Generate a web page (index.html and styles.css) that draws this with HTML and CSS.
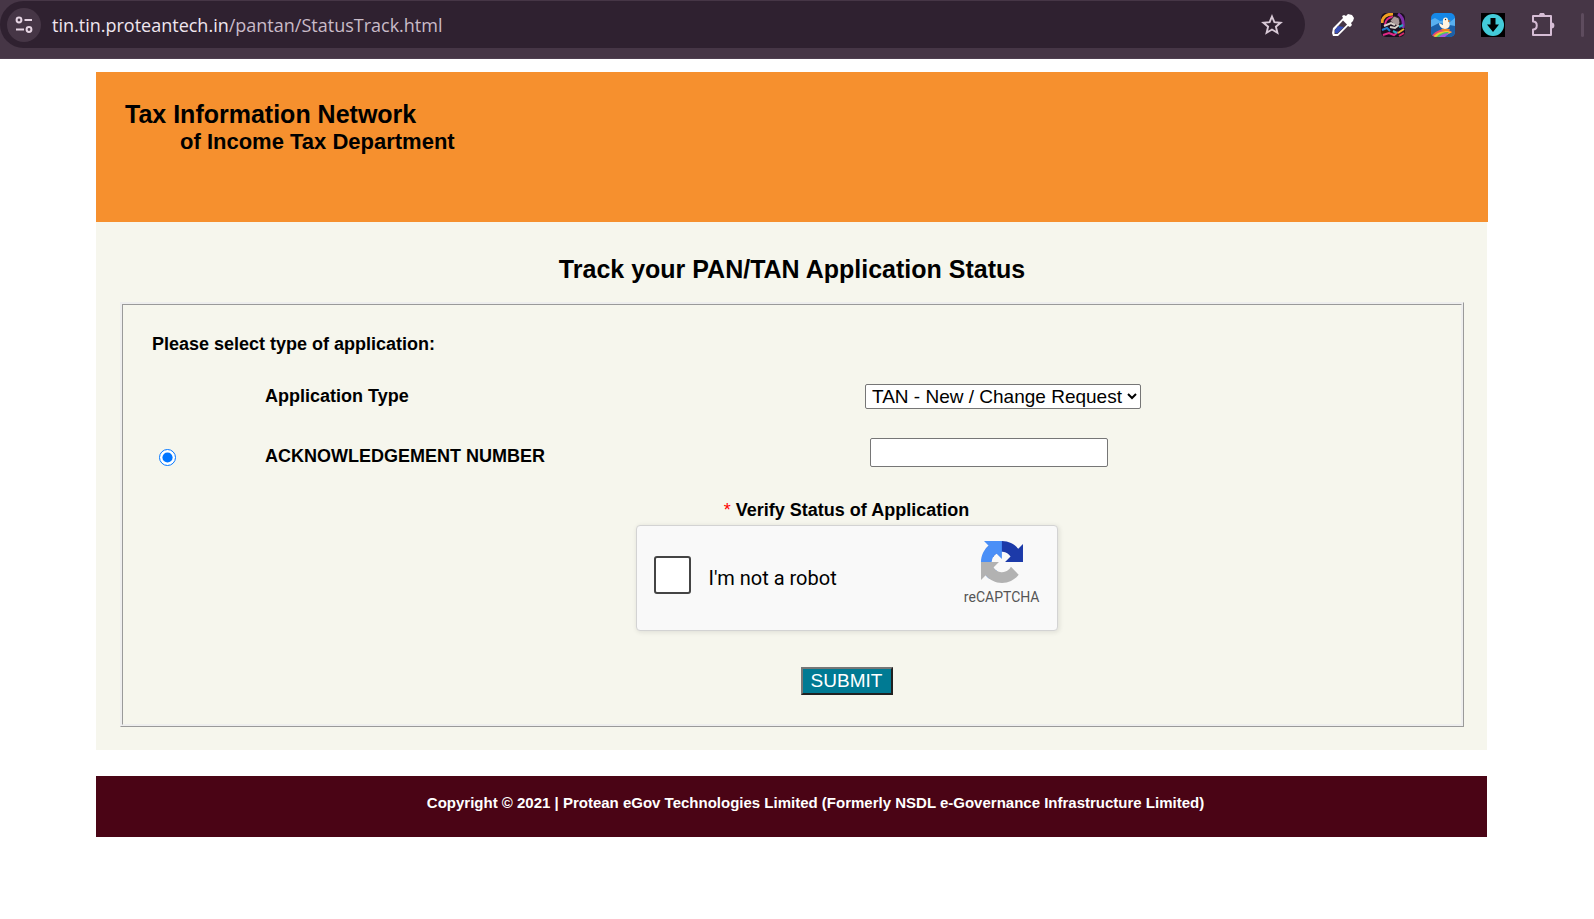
FILE: index.html
```html
<!DOCTYPE html>
<html lang="en">
<head>
    <meta charset="UTF-8">
    <title>Track your PAN/TAN Application Status</title>
    <link rel="stylesheet" href="styles.css">
</head>
<body>
    <div class="browser-bar">
        <div class="address-bar">
            <button class="site-info" aria-label="View site information">
                <svg width="18" height="18" viewBox="0 0 18 18" fill="none" stroke="#e6d5e3" stroke-width="2">
                    <circle cx="4" cy="4" r="2.4"/>
                    <path d="M9.500 4H17M1 13.500h8"/>
                    <circle cx="14" cy="13.500" r="2.4"/>
                </svg>
            </button>
            <a class="url" href="#">tin.tin.proteantech.in<span class="url-path">/pantan/StatusTrack.html</span></a>
            <button class="icon-button" aria-label="Bookmark this page">
                <svg width="22" height="22" viewBox="0 0 22 22" fill="none" stroke="#d8c9d6" stroke-width="1.9">
                    <path d="M11 2.500l2.400 5.700 6.200.5-4.700 4 1.500 6.100L11 15.500l-5.400 3.300 1.500-6.100-4.700-4 6.200-.5z"/>
                </svg>
            </button>
        </div>
        <div class="extensions">
            <button class="icon-button" aria-label="Color picker">
                <svg width="24" height="24" viewBox="0 0 24 24">
                    <path d="M2 23l-1-3 1-5L12 5l-1-2 2-1 2 1 2-2 4 1 2 3-1 3-2 2 1 2-2 2-2-1L7 23z" fill="#fff"/>
                    <path d="M12 7.500l4 4-9.500 9.500H3.500v-4z" fill="#463646"/>
                    <path d="M7 13l6 1-7 6.500-2-.5v-3z" fill="#3850b8"/>
                </svg>
            </button>
            <button class="icon-button" aria-label="Graffiti extension">
                <svg width="24" height="24" viewBox="0 0 24 24">
                    <clipPath id="tile"><rect width="24" height="24" rx="5"/></clipPath>
                    <g clip-path="url(#tile)" fill="none" stroke-width="2">
                        <rect width="24" height="24" fill="#1b1020"/>
                        <path d="M1 10C1 4 6 1 12 1" stroke="#f0a020" stroke-width="3"/>
                        <path d="M4 12c0-5 4-8 8-8" stroke="#e02888"/>
                        <path d="M17 1c5 3 6 8 5 14" stroke="#8030a8" stroke-width="3"/>
                        <path d="M9 8l4-5 5 2 1 5-3 3-3-2z" fill="#a89898" stroke="#332830" stroke-width="1"/>
                        <path d="M3 13l7-3 4 2M9 14l5 1 4-3" stroke="#d8d0c8"/>
                        <path d="M1 17l5-2 3 3" stroke="#2078c8"/>
                        <path d="M2 22l6-2 5 2 4-3" stroke="#e02888"/>
                        <path d="M12 18l4 2M18 14l4-2" stroke="#28a8c0"/>
                        <path d="M17 20l6-4" stroke="#e8b030"/>
                        <path d="M18 23l5-3" stroke="#d82868"/>
                    </g>
                </svg>
            </button>
            <button class="icon-button" aria-label="Duck extension">
                <svg width="24" height="24" viewBox="0 0 24 24">
                    <g clip-path="url(#tile)">
                        <rect width="24" height="24" fill="#1588e8"/>
                        <path d="M0 7l4-2 5 3 5-1 5 2 5-4v9H0z" fill="#58b0f0"/>
                        <path d="M0 14l8-4 16 3v11H0z" fill="#1c60a8"/>
                        <path d="M0 24c3-5 8-8 16-8l5 3-9 5z" fill="#e84870"/>
                        <path d="M2 24c3-4 8-6 15-6l4 1-9 5z" fill="#f0c830"/>
                        <path d="M5 24c3-3 7-5 13-5l-5 5z" fill="#48c868"/>
                        <path d="M8 24c3-3 6-4 10-4l-4 4z" fill="#a058e0"/>
                        <path d="M8 10l4 2V8c-1-4 5-5 5-1 0 2 3 4 1 7-2 3-9 3-10-4z" fill="#fff4e0"/>
                        <path d="M17 7l3 1-3 1zM10 16h9l-1 2h-6z" fill="#f08020"/>
                        <circle cx="14.500" cy="6.500" r=".7" fill="#222"/>
                    </g>
                </svg>
            </button>
            <button class="icon-button" aria-label="Downloader">
                <svg width="24" height="24" viewBox="0 0 24 24">
                    <rect width="24" height="24" fill="#000"/>
                    <circle cx="12" cy="12" r="11" fill="#43cbd9"/>
                    <path d="M9.500 5h5v6.500H18L12 19l-6-7.500h3.500z" fill="#000"/>
                </svg>
            </button>
            <button class="icon-button" aria-label="Extensions">
                <svg width="24" height="24" viewBox="0 0 24 24" stroke="#d6bdd5" stroke-width="2" stroke-linejoin="round">
                    <path d="M2 3h18v19H2v-5.500c5 0 5-8 0-8z" fill="none"/>
                    <path d="M9 2.500c0-2.500 4-2.500 4 0zM20.500 10.500c2.500 0 2.500 4 0 4z" fill="#d6bdd5"/>
                </svg>
            </button>
            <span class="separator"></span>
        </div>
    </div>

    <div class="page">
        <header class="site-header">
            <div class="site-name">Tax Information Network</div>
            <div class="site-department">of Income Tax Department</div>
        </header>

        <main class="content">
            <h1 class="page-title">Track your PAN/TAN Application Status</h1>
            <form class="status-form">
                <p class="form-intro">Please select type of application:</p>
                <div class="form-row">
                    <label class="form-label" for="appType">Application Type</label>
                    <select id="appType" class="type-select">
                        <option>TAN - New / Change Request</option>
                    </select>
                </div>
                <div class="form-row">
                    <input type="radio" id="ackOption" class="ack-radio" name="searchBy" aria-label="Search by acknowledgement number" checked>
                    <label class="form-label" for="ackNumber">ACKNOWLEDGEMENT NUMBER</label>
                    <input type="text" id="ackNumber" class="ack-input">
                </div>
                <div class="verify">
                    <p class="verify-title"><span class="required">*</span> Verify Status of Application</p>
                    <div class="captcha">
                        <input type="checkbox" id="notRobot" class="captcha-check">
                        <label for="notRobot" class="captcha-label">I'm not a robot</label>
                        <div class="captcha-brand">
                            <svg width="42" height="42" viewBox="0 0 64 64">
                                <path fill="#1c3aa9" d="M64 31.955l-.033-1.370V4.687l-7.160 7.160C50.948 4.674 42.033.093 32.050.093c-10.400 0-19.622 4.960-25.458 12.640l11.736 11.860a15.550 15.550 0 0 1 4.754-5.334c2.050-1.600 4.952-2.906 8.968-2.906.485 0 .860.057 1.135.163 4.976.393 9.288 3.140 11.828 7.124l-8.307 8.307L64 31.953"/>
                                <path fill="#4a8ff7" d="M31.862.094l-1.370.033H4.594l7.160 7.160C4.580 13.147 0 22.060 0 32.046c0 10.400 4.960 19.622 12.640 25.458L24.500 45.768a15.550 15.550 0 0 1-5.334-4.754c-1.600-2.050-2.906-4.952-2.906-8.968 0-.485.057-.860.163-1.135.393-4.976 3.140-9.288 7.124-11.828l8.307 8.307L31.860.095"/>
                                <path fill="#b2b2b2" d="M.001 32.045l.033 1.370v25.898l7.160-7.160c5.860 7.173 14.774 11.754 24.760 11.754 10.400 0 19.622-4.960 25.458-12.640l-11.736-11.860a15.550 15.550 0 0 1-4.754 5.334c-2.050 1.600-4.952 2.906-8.968 2.906-.485 0-.860-.057-1.135-.163-4.976-.393-9.288-3.140-11.828-7.124l8.307-8.307c-10.522.040-22.400.066-27.295-.005"/>
                            </svg>
                            <span>reCAPTCHA</span>
                        </div>
                    </div>
                    <button type="button" class="submit-button">SUBMIT</button>
                </div>
            </form>
        </main>

        <footer class="site-footer">
            Copyright © 2021 | Protean eGov Technologies Limited (Formerly NSDL e-Governance Infrastructure Limited)
        </footer>
    </div>
</body>
</html>
```
FILE: styles.css
```css
* {
    box-sizing: border-box;
}

body {
    margin: 0;
    background-color: #fff;
    color: #000;
    font-family: Arial, "Liberation Sans", sans-serif;
}

/* browser toolbar */
.browser-bar {
    display: flex;
    gap: 26px;
    height: 59px;
    padding: 1px 10px 10px 0;
    background-color: #463646;
    border-bottom: 1px solid #4e3e4f;
}

.address-bar {
    flex: 1;
    display: flex;
    align-items: center;
    padding: 0 22px 0 7px;
    border-radius: 24px;
    background-color: #2f2130;
}

.site-info {
    display: flex;
    align-items: center;
    justify-content: center;
    width: 34px;
    height: 34px;
    padding: 0;
    border: none;
    border-radius: 50%;
    background-color: #463646;
}

.url {
    flex: 1;
    margin-left: 11px;
    color: #f0e6ef;
    font-family: "Segoe UI", "Open Sans", "Noto Sans", sans-serif;
    font-size: 18px;
    text-decoration: none;
}

.url-path {
    color: #c9bbc8;
}

.icon-button {
    display: flex;
    padding: 0;
    border: none;
    background: none;
}

.extensions {
    display: flex;
    align-items: center;
    gap: 26px;
}

.separator {
    width: 3px;
    height: 24px;
    border-radius: 2px;
    background-color: #5e4c5e;
}

/* page */
.page {
    margin: 13px 106px 0 96px;
}

.site-header {
    height: 150px;
    padding: 28px 29px;
    background-color: #f6902e;
    font-weight: bold;
}

.site-name {
    font-size: 25px;
    line-height: 28px;
}

.site-department {
    margin-left: 55px;
    font-size: 22px;
    line-height: 28px;
}

.content {
    margin-right: 1px;
    padding: 32px 23px 23px 24px;
    background-color: #f6f6ed;
}

.page-title {
    margin: 0 0 18px;
    font-size: 25px;
    line-height: 30px;
    text-align: center;
}

.status-form {
    padding: 24px 0 29px 29px;
    border: 3px ridge #eee;
}

.form-intro {
    margin: 0 0 15px;
    font-size: 18px;
    font-weight: bold;
    line-height: 30px;
}

.form-row {
    display: grid;
    grid-template-columns: 113px 1fr 1fr;
    align-items: center;
    height: 44px;
    margin-bottom: 16px;
}

.form-label {
    grid-column: 2;
    font-size: 18px;
    font-weight: bold;
}

.type-select {
    justify-self: start;
    width: 276px;
    height: 25px;
    margin-left: 2px;
    padding-left: 2px;
    border: 1px solid #767676;
    border-radius: 2px;
    background-color: #fff;
    color: #000;
    font-family: inherit;
    font-size: 19px;
}

.ack-radio {
    width: 17px;
    height: 17px;
    margin: 2px 0 0 7px;
}

.ack-input {
    justify-self: start;
    width: 238px;
    height: 29px;
    margin: 0 0 8px 7px;
    border: 1px solid #767676;
    border-radius: 2px;
    font-family: inherit;
    font-size: 18px;
}

.verify {
    display: flex;
    flex-direction: column;
    align-items: center;
    padding: 4px 0 0 80px;
}

.verify-title {
    margin: 0 0 3px;
    font-size: 18px;
    font-weight: bold;
    line-height: 24px;
}

.required {
    color: #f00;
    font-weight: normal;
}

.captcha {
    display: flex;
    align-items: center;
    width: 422px;
    height: 106px;
    margin-bottom: 36px;
    padding: 0 17px;
    border: 1px solid #d3d3d3;
    border-radius: 4px;
    background-color: #f9f9f9;
    box-shadow: 1px 1px 4px 1px rgba(0,0,0,0.08);
    font-family: Roboto, sans-serif;
}

.captcha-check {
    appearance: none;
    width: 37px;
    height: 38px;
    margin: 0 18px 6px 0;
    border: 2px solid #444;
    border-radius: 3px;
    background-color: #fff;
}

.captcha-label {
    flex: 1;
    font-size: 20px;
}

.captcha-brand {
    display: flex;
    flex-direction: column;
    align-items: center;
    gap: 6px;
    margin-bottom: 10px;
    color: #555;
    font-size: 14px;
    line-height: 16px;
}

.submit-button {
    width: 92px;
    height: 28px;
    padding: 0;
    border: 2px outset #767676;
    background-color: #007a93;
    color: #fff;
    font-family: inherit;
    font-size: 19px;
}

.site-footer {
    height: 61px;
    margin: 26px 1px 0 0;
    padding: 18px 0 0 48px;
    background-color: #4a0415;
    color: #fff;
    font-size: 15px;
    font-weight: bold;
    line-height: 18px;
    text-align: center;
}
```
